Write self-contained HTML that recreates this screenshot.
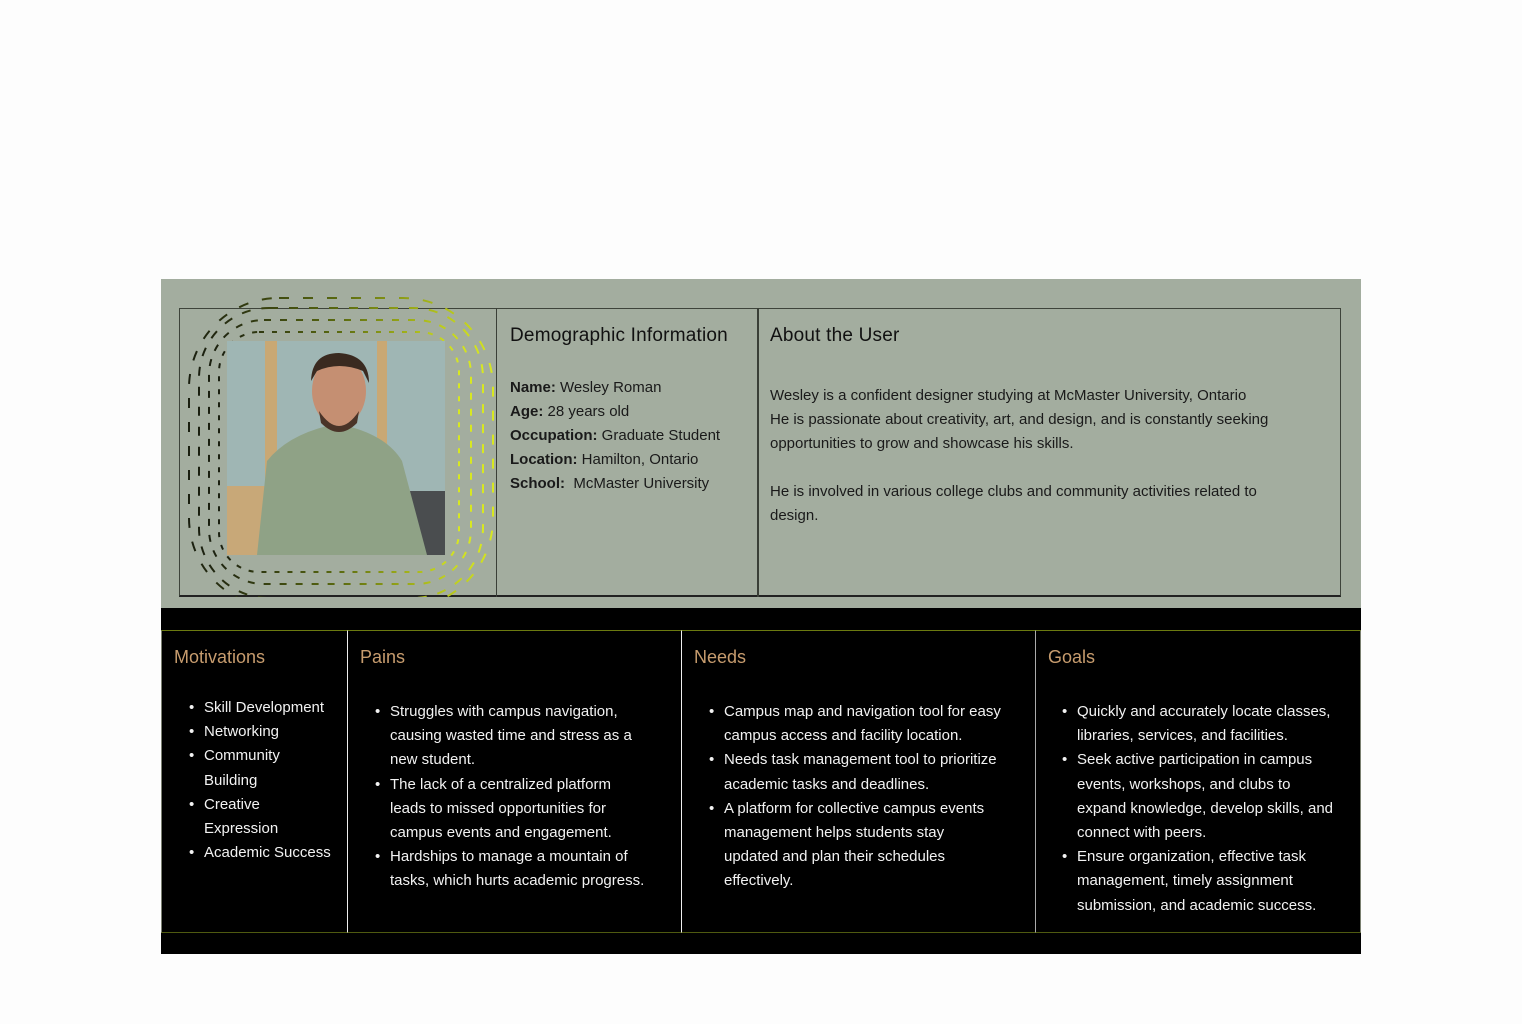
<!DOCTYPE html>
<html><head><meta charset="utf-8"><style>
*{margin:0;padding:0;box-sizing:border-box}
body{width:1522px;height:1024px;background:#fdfdfd;position:relative;font-family:"Liberation Sans",sans-serif;overflow:hidden}
.a{position:absolute}
.top{left:161px;top:279px;width:1200px;height:329px;background:#a3ad9f}
.inner{left:179px;top:308px;width:1162px;height:289px;border:1px solid #3e443b;border-bottom:2px solid #222}
.vl{position:absolute;top:308px;width:2px;height:289px;background:#3a3f37}
.h{font-size:19px;color:#111;letter-spacing:.2px}
.t{font-size:15px;line-height:24px;color:#1a1a1a}
.bot{left:161px;top:608px;width:1200px;height:346px;background:#000}
.cell{position:absolute;top:630px;height:303px;border:1px solid #7a7f70;border-top-color:#6b7a10;border-bottom-color:#4f5a10}
.ch{position:absolute;top:647px;font-size:18px;color:#c79c6e}
ul{position:absolute;color:#f2f2f2;font-size:15px;line-height:24.2px;list-style:none}
li{position:relative;padding-left:15px}
li:before{content:"•";position:absolute;left:0;top:0}
b{font-weight:bold}
</style></head><body>
<div class="a top"></div>
<div class="a inner"></div>
<div class="vl" style="left:496px;width:1px"></div>
<div class="vl" style="left:757px"></div>
<svg class="a" style="left:179px;top:290px" width="318" height="307" viewBox="0 0 318 307">
<defs><linearGradient id="g" x1="0" y1="0" x2="1" y2="0"><stop offset="0" stop-color="#1a1f10"/><stop offset=".5" stop-color="#5a6a10"/><stop offset="1" stop-color="#d8e820"/></linearGradient></defs>
<g fill="none" stroke="url(#g)" stroke-width="2">
<rect x="40" y="42" width="240" height="240" rx="40" stroke-dasharray="5 8"/>
<rect x="30" y="30" width="262" height="264" rx="55" stroke-dasharray="7 9"/>
<rect x="20" y="18" width="284" height="290" rx="70" stroke-dasharray="9 11"/>
<rect x="10" y="8" width="304" height="310" rx="90" stroke-dasharray="10 14"/>
</g></svg>
<svg class="a" style="left:227px;top:341px" width="218" height="214" viewBox="0 0 218 214">
<rect width="218" height="214" fill="#9fb6b4"/>
<rect x="38" y="0" width="12" height="140" fill="#c9a874"/>
<rect x="150" y="0" width="10" height="150" fill="#c9a874"/>
<rect x="0" y="145" width="60" height="69" fill="#c8a878"/>
<rect x="160" y="150" width="58" height="64" fill="#4a4d4f"/>
<path d="M30 214 L40 120 Q60 95 100 85 L120 85 Q160 95 175 120 L200 214Z" fill="#8fa286"/>
<ellipse cx="112" cy="50" rx="27" ry="35" fill="#c58f72"/>
<path d="M84 40 Q85 12 112 12 Q142 14 142 42 L136 30 Q112 20 90 30Z" fill="#3a2a20"/>
<path d="M92 70 Q112 100 132 70 L130 82 Q112 100 94 82Z" fill="#4a3428"/>
</svg>
<div class="a h" style="left:510px;top:325px">Demographic Information</div>
<div class="a t" style="left:510px;top:376px"><b>Name:</b> Wesley Roman<br><b>Age:</b> 28 years old<br><b>Occupation:</b> Graduate Student<br><b>Location:</b> Hamilton, Ontario<br><b>School:</b>&nbsp; McMaster University</div>
<div class="a h" style="left:770px;top:325px">About the User</div>
<div class="a t" style="left:770px;top:384px;width:530px">Wesley is a confident designer studying at McMaster University, Ontario<br>He is passionate about creativity, art, and design, and is constantly seeking opportunities to grow and showcase his skills.<br><br>He is involved in various college clubs and community activities related to<br>design.</div>
<div class="a bot"></div>
<div class="cell" style="left:161px;width:187px"></div>
<div class="cell" style="left:347px;width:335px;border-left-color:#eee"></div>
<div class="cell" style="left:681px;width:355px;border-left-color:#eee"></div>
<div class="cell" style="left:1035px;width:326px;border-left-color:#aaa"></div>
<div class="ch" style="left:174px">Motivations</div>
<div class="ch" style="left:360px">Pains</div>
<div class="ch" style="left:694px">Needs</div>
<div class="ch" style="left:1048px">Goals</div>
<ul style="left:189px;top:696px;width:150px"><li>Skill Development</li><li>Networking</li><li>Community<br>Building</li><li>Creative<br>Expression</li><li>Academic Success</li></ul>
<ul style="left:375px;top:700px;width:300px"><li>Struggles with campus navigation,<br>causing wasted time and stress as a<br>new student.</li><li>The lack of a centralized platform<br>leads to missed opportunities for<br>campus events and engagement.</li><li>Hardships to manage a mountain of<br>tasks, which hurts academic progress.</li></ul>
<ul style="left:709px;top:700px;width:318px"><li>Campus map and navigation tool for easy<br>campus access and facility location.</li><li>Needs task management tool to prioritize<br>academic tasks and deadlines.</li><li>A platform for collective campus events<br>management helps students stay<br>updated and plan their schedules<br>effectively.</li></ul>
<ul style="left:1062px;top:700px;width:295px"><li>Quickly and accurately locate classes,<br>libraries, services, and facilities.</li><li>Seek active participation in campus<br>events, workshops, and clubs to<br>expand knowledge, develop skills, and<br>connect with peers.</li><li>Ensure organization, effective task<br>management, timely assignment<br>submission, and academic success.</li></ul>
</body></html>
